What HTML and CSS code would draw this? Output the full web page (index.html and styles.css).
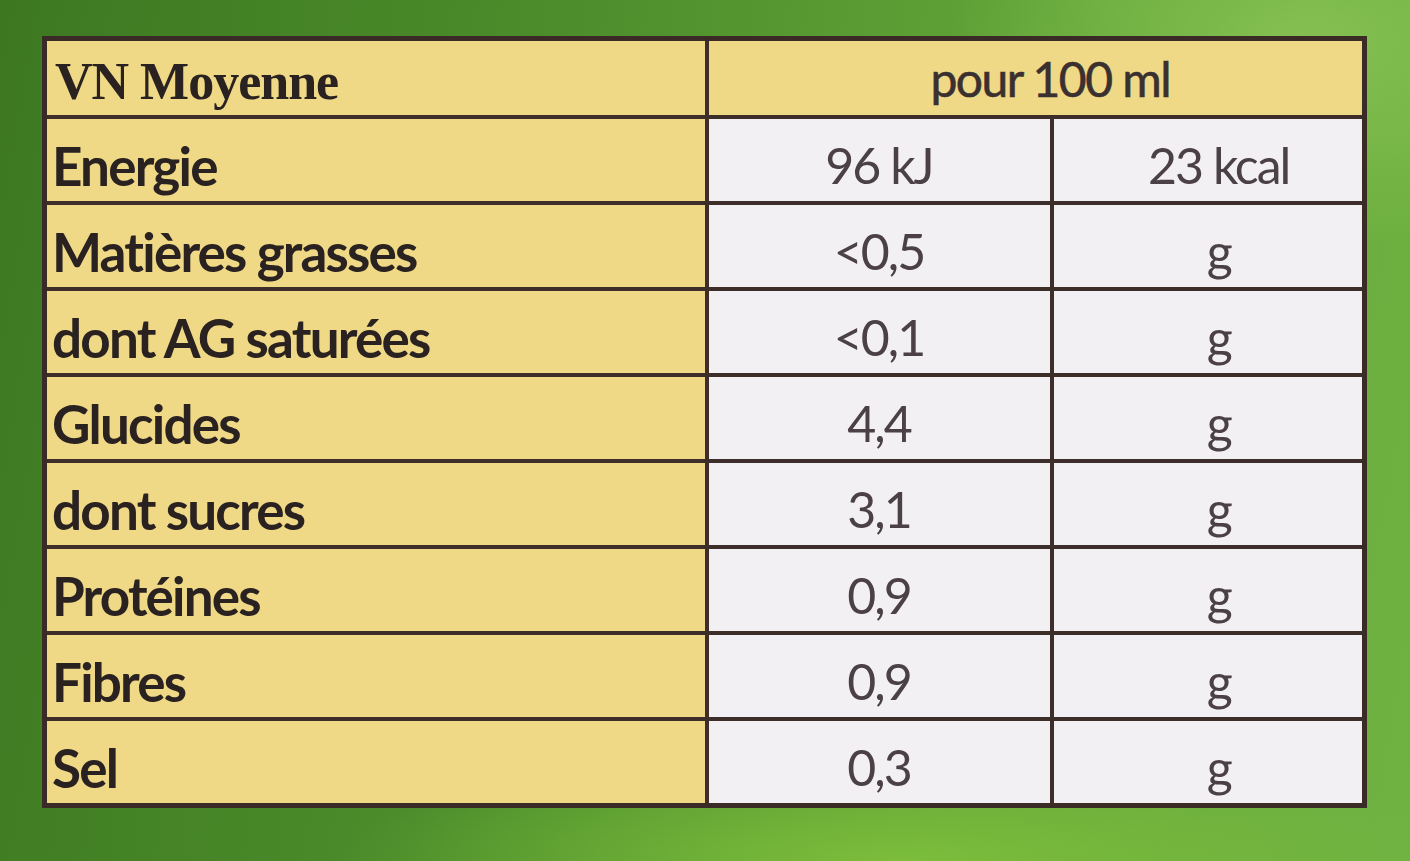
FILE: index.html
```html
<!DOCTYPE html>
<html lang="fr">
<head>
<meta charset="utf-8">
<title>Valeurs nutritionnelles</title>
<link rel="stylesheet" href="styles.css">
</head>
<body>
<div class="scene">
  <table class="nutri">
    <colgroup>
      <col class="c-label">
      <col class="c-val">
      <col class="c-unit">
    </colgroup>
    <tr class="head">
      <th class="label title">VN Moyenne</th>
      <th class="per" colspan="2">pour 100 ml</th>
    </tr>
    <tr><td class="label">Energie</td><td class="val">96 kJ</td><td class="unit">23 kcal</td></tr>
    <tr><td class="label">Matières grasses</td><td class="val">&lt;0,5</td><td class="unit">g</td></tr>
    <tr><td class="label">dont AG saturées</td><td class="val">&lt;0,1</td><td class="unit">g</td></tr>
    <tr><td class="label">Glucides</td><td class="val">4,4</td><td class="unit">g</td></tr>
    <tr><td class="label">dont sucres</td><td class="val">3,1</td><td class="unit">g</td></tr>
    <tr><td class="label">Protéines</td><td class="val">0,9</td><td class="unit">g</td></tr>
    <tr><td class="label">Fibres</td><td class="val">0,9</td><td class="unit">g</td></tr>
    <tr><td class="label">Sel</td><td class="val">0,3</td><td class="unit">g</td></tr>
  </table>
</div>
</body>
</html>
```

FILE: styles.css
```css
html, body {
  margin: 0;
  padding: 0;
}
body {
  width: 1410px;
  height: 861px;
  overflow: hidden;
  background:
    radial-gradient(ellipse 500px 300px at 1300px 40px, rgba(150, 205, 95, 0.6), rgba(150, 205, 95, 0) 70%),
    radial-gradient(ellipse 800px 160px at 900px 861px, rgba(130, 195, 60, 0.8), rgba(130, 195, 60, 0) 70%),
    linear-gradient(100deg, #3d7821 0%, #4c8c2b 35%, #64a639 70%, #70b242 100%);
}
.scene {
  padding: 36px 0 0 42px;
}
.nutri {
  border-collapse: collapse;
  width: 1320px;
  table-layout: fixed;
  border: 5px solid #3a2b27;
  font-family: Lato, "Open Sans", sans-serif;
  color: #2d2422;
}
.c-label { width: 662px; }
.c-val { width: 345px; }
.c-unit { width: 313px; }
.nutri td, .nutri th {
  border: 4px solid #3d2e2a;
  height: 72px;
  padding: 0;
}
.nutri .head th {
  height: 70px;
}
.nutri .label {
  background: #efd886;
  text-align: left;
  padding: 10px 0 0 5px;
  font-weight: 700;
  font-size: 53px;
  letter-spacing: -1.8px;
  color: #2a2220;
  white-space: nowrap;
}
.nutri .title {
  font-family: "Liberation Serif", "DejaVu Serif", serif;
  font-size: 52px;
  letter-spacing: -1px;
  vertical-align: bottom;
  padding: 0 0 4px 8px;
}
.nutri .per {
  background: #efd886;
  font-weight: 400;
  font-size: 48px;
  letter-spacing: -1.5px;
  color: #3a3030;
  text-align: center;
  padding: 0 0 0 30px;
  -webkit-text-stroke: 0.6px #3a3030;
}
.nutri .val, .nutri .unit {
  background: #f2f0f3;
  text-align: center;
  font-size: 50px;
  letter-spacing: -2px;
  color: #4a4046;
  padding-top: 10px;
}
.nutri .unit {
  padding-left: 22px;
}
```
